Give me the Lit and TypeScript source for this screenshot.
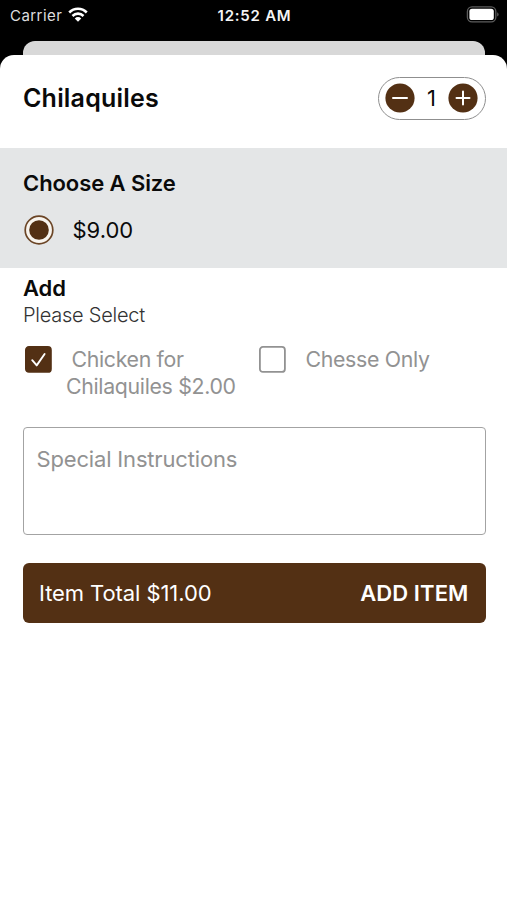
import { LitElement, html, css, svg } from "lit";
import { customElement, property, state } from "lit/decorators.js";
import { classMap } from "lit/directives/class-map.js";

const tick = svg`<path d="M7.2 14.2L11.7 19.4L19.6 8" fill="none" stroke="#fff" stroke-width="1.9" stroke-linecap="round" stroke-linejoin="round"/>`;

@customElement("status-bar")
class StatusBar extends LitElement {
  static styles = css`
    :host { display: grid; grid-template-columns: 1fr auto 1fr; align-items: center; height: 30px; box-sizing: border-box; padding: 0 8px 0 10px; color: #dedede; font-size: 15px; }
    .left { display: flex; align-items: center; gap: 5.5px; letter-spacing: 0.45px; }
    .time { font-weight: 600; letter-spacing: 0.75px; color: #f4f4f4; }
    .right { display: flex; justify-content: flex-end; }
    svg { display: block; }
    .wifi { margin-top: -1px; }
    .battery { margin-top: -2px; }
  `;
  render() {
    return html`
      <div class="left">
        <span>Carrier</span>
        <svg class="wifi" width="20" height="15" viewBox="0 0 21 15" preserveAspectRatio="none">
          <g fill="none" stroke="#fff" stroke-width="2.7">
            <path d="M1.3 5.5A13.2 13.2 0 0 1 19.7 5.5" />
            <path d="M4.7 9A8.3 8.3 0 0 1 16.3 9" />
          </g>
          <path d="M10.5 14.8L7.1 11.4A4.9 4.9 0 0 1 13.9 11.4Z" fill="#fff" />
        </svg>
      </div>
      <span class="time">12:52 AM</span>
      <div class="right">
        <svg class="battery" width="33" height="17" viewBox="0 0 33 17">
          <rect x="1.4" y="0.9" width="28.4" height="15" rx="4.6" fill="none" stroke="#5c5c5c" stroke-width="1.3" />
          <rect x="3.4" y="2.8" width="24.4" height="11.2" rx="2.6" fill="#fff" />
          <path d="M31.2 6.2Q32.6 7 32.6 8.4T31.2 10.6Z" fill="#5c5c5c" />
        </svg>
      </div>
    `;
  }
}

@customElement("quantity-stepper")
class QuantityStepper extends LitElement {
  @property({ type: Number }) value = 1;
  static styles = css`
    :host { display: flex; align-items: center; justify-content: space-between; width: 107.5px; height: 43px; box-sizing: border-box; border: 1.4px solid #8f8f8f; border-radius: 22px; padding: 0 6.5px 0 6px; font-size: 22px; }
    svg { display: block; }
  `;
  render() {
    return html`
      <svg width="30" height="30" viewBox="0 0 30 30">
        <circle cx="15" cy="15" r="14.6" fill="#533014" />
        <path d="M8 15H22" stroke="#fff" stroke-width="2" stroke-linecap="round" />
      </svg>
      <span>${this.value}</span>
      <svg width="30" height="30" viewBox="0 0 30 30">
        <circle cx="15" cy="15" r="14.6" fill="#533014" />
        <path d="M8.5 15H21.5M15 8.5V21.5" stroke="#fff" stroke-width="2" stroke-linecap="round" />
      </svg>
    `;
  }
}

@customElement("check-option")
class CheckOption extends LitElement {
  @property({ type: Boolean }) checked = false;
  static styles = css`
    :host { display: flex; align-items: flex-start; color: #929292; font-size: 21.3px; letter-spacing: -0.32px; line-height: 26.5px; }
    svg { display: block; flex: none; margin-right: 14px; }
    .label { text-indent: 5.5px; white-space: pre-line; }
    .on rect { fill: #533014; stroke: #533014; }
    rect { fill: #fff; stroke: #929292; }
  `;
  render() {
    return html`
      <svg class=${classMap({ on: this.checked })} width="27" height="27" viewBox="0 0 27 27">
        <rect x="0.9" y="0.9" width="25" height="25" rx="3" stroke-width="1.8" />
        ${this.checked ? tick : null}
      </svg>
      <div class="label"><slot></slot></div>
    `;
  }
}

@customElement("app-root")
class AppRoot extends LitElement {
  @state() private quantity = 1;
  static styles = css`
    :host { display: flex; flex-direction: column; height: 900px; overflow: hidden; background: #000; color: #0a0a0a; font-family: Inter, sans-serif; font-size: 22px; }
    .behind { flex: none; height: 14px; margin: 11px 22px 0 23px; background: #d8d8d8; border-radius: 12px 12px 0 0; }
    .sheet { flex: 1; background: #fff; border-radius: 14px 14px 0 0; }
    .head { display: flex; align-items: center; justify-content: space-between; height: 93px; box-sizing: border-box; padding: 0 21.5px 7px 23px; }
    h1, h2, p { margin: 0; }
    h1 { font-size: 25px; font-weight: 600; letter-spacing: 0.2px; }
    h2 { font-size: 22px; font-weight: 600; line-height: 28px; letter-spacing: -0.08px; }
    .size { height: 119.5px; box-sizing: border-box; background: #e4e6e7; padding: 21px 23px 0; }
    .radio { display: flex; align-items: center; gap: 18.5px; margin-top: 18px; }
    .radio svg { display: block; margin-left: 1px; }
    .add { padding: 6.5px 23px 0; }
    .hint { font-size: 20px; line-height: 26px; color: #333; font-weight: 300; letter-spacing: -0.25px; }
    .options { display: grid; grid-template-columns: 234px auto; padding: 18px 0 0 2px; }
    .notes { margin: 28px 21.5px 0 22.5px; height: 108px; box-sizing: border-box; border: 1.5px solid #a3a3a3; border-radius: 4px; padding: 17px 13px; line-height: 28px; color: #929292; letter-spacing: -0.17px; }
    .total { display: flex; align-items: center; justify-content: space-between; margin: 28px 21.5px 0 22.5px; height: 60px; box-sizing: border-box; padding: 0 17px 0 16.5px; background: #533014; border-radius: 6px; color: #fff; letter-spacing: -0.08px; }
    .total b { font-weight: 600; letter-spacing: 0.1px; }
  `;
  render() {
    return html`
      <status-bar></status-bar>
      <div class="behind"></div>
      <div class="sheet">
        <div class="head">
          <h1>Chilaquiles</h1>
          <quantity-stepper .value=${this.quantity}></quantity-stepper>
        </div>
        <div class="size">
          <h2>Choose A Size</h2>
          <div class="radio">
            <svg width="30" height="30" viewBox="0 0 30 30">
              <circle cx="15" cy="15" r="13.8" fill="#f8f4ee" stroke="#6b4526" stroke-width="1.7" />
              <circle cx="15" cy="15" r="9.8" fill="#533014" />
            </svg>
            <span>$9.00</span>
          </div>
        </div>
        <div class="add">
          <h2>Add</h2>
          <p class="hint">Please Select</p>
          <div class="options">
            <check-option checked>Chicken for
Chilaquiles $2.00</check-option>
            <check-option>Chesse Only</check-option>
          </div>
        </div>
        <div class="notes">Special Instructions</div>
        <div class="total"><span>Item Total $11.00</span><b>ADD ITEM</b></div>
      </div>
    `;
  }
}
